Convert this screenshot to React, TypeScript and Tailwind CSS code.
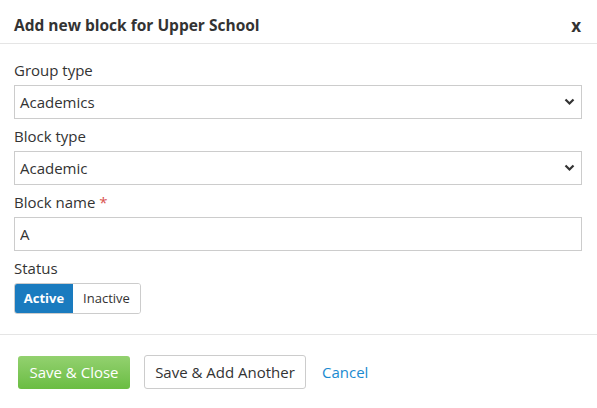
import { useState } from "react";

/**
 * Simple select with a chevron drawn on the right
 */
function SelectField({ label, value }: { label: string; value: string }) {
  return (
    <div className="flex flex-col">
      <label className="text-[15px] leading-[20px] text-[#333] mb-[5px]">{label}</label>
      <div className="relative h-[34px] border border-[#ccc] bg-white flex items-center pl-[5px] pr-[6px]">
        <span className="flex-1 text-[15px] text-[#333]">{value}</span>
        <svg width="11" height="8" viewBox="0 0 11 8" className="text-[#333]">
          <path d="M1.5 1.5 L5.5 5.5 L9.5 1.5" fill="none" stroke="currentColor" strokeWidth="2.2" />
        </svg>
      </div>
    </div>
  );
}

export default function App() {
  const [status, setStatus] = useState<"active" | "inactive">("active");

  return (
    <div
      className="w-[597px] h-[408px] bg-white text-[#333] overflow-hidden"
      style={{ fontFamily: '"Open Sans", "Noto Sans", sans-serif' }}
    >
      {/* Header */}
      <div className="h-[44px] flex items-center justify-between pt-[8px] pl-[14px] pr-[16px] border-b border-[#e5e5e5]">
        <h2 className="text-[15.5px] font-bold text-[#333]">Add new block for Upper School</h2>
        <button className="text-[17px] font-bold leading-none text-[#333]">x</button>
      </div>

      {/* Body */}
      <div className="pl-[14px] pr-[15px] pt-[16px] pb-[20px] border-b border-[#e5e5e5] flex flex-col gap-[7px]">
        <SelectField label="Group type" value="Academics" />
        <SelectField label="Block type" value="Academic" />

        <div className="flex flex-col">
          <label className="text-[15px] leading-[20px] text-[#333] mb-[5px]">
            Block name <span className="text-[#d9534f]">*</span>
          </label>
          <input
            className="h-[34px] border border-[#ccc] px-[5px] text-[15px] text-[#333] outline-none"
            defaultValue="A"
          />
        </div>

        <div className="flex flex-col">
          <label className="text-[15px] leading-[20px] text-[#333] mb-[5px]">Status</label>
          <div className="flex">
            <div className="flex h-[31px] border border-[#ccc] rounded-[3px] overflow-hidden">
              <button
                onClick={() => setStatus("active")}
                className={`w-[58px] text-[13px] ${status === "active" ? "bg-[#1a7bbf] text-white font-bold" : "bg-white text-[#333]"}`}
              >
                Active
              </button>
              <button
                onClick={() => setStatus("inactive")}
                className={`w-[67px] text-[13px] ${status === "inactive" ? "bg-[#1a7bbf] text-white font-bold" : "bg-white text-[#333]"}`}
              >
                Inactive
              </button>
            </div>
          </div>
        </div>
      </div>

      {/* Footer */}
      <div className="flex items-center pl-[18px] pt-[20px]">
        <button className="h-[33px] w-[112px] rounded-[3px] text-white text-[15px] bg-gradient-to-b from-[#93d16f] to-[#6abd42]">
          Save &amp; Close
        </button>
        <button className="ml-[14px] h-[34px] w-[162px] rounded-[3px] border border-[#ccc] bg-white text-[15px] text-[#333]">
          Save &amp; Add Another
        </button>
        <a href="#" className="ml-[16px] text-[15px] text-[#1a8ad0]">
          Cancel
        </a>
      </div>
    </div>
  );
}
